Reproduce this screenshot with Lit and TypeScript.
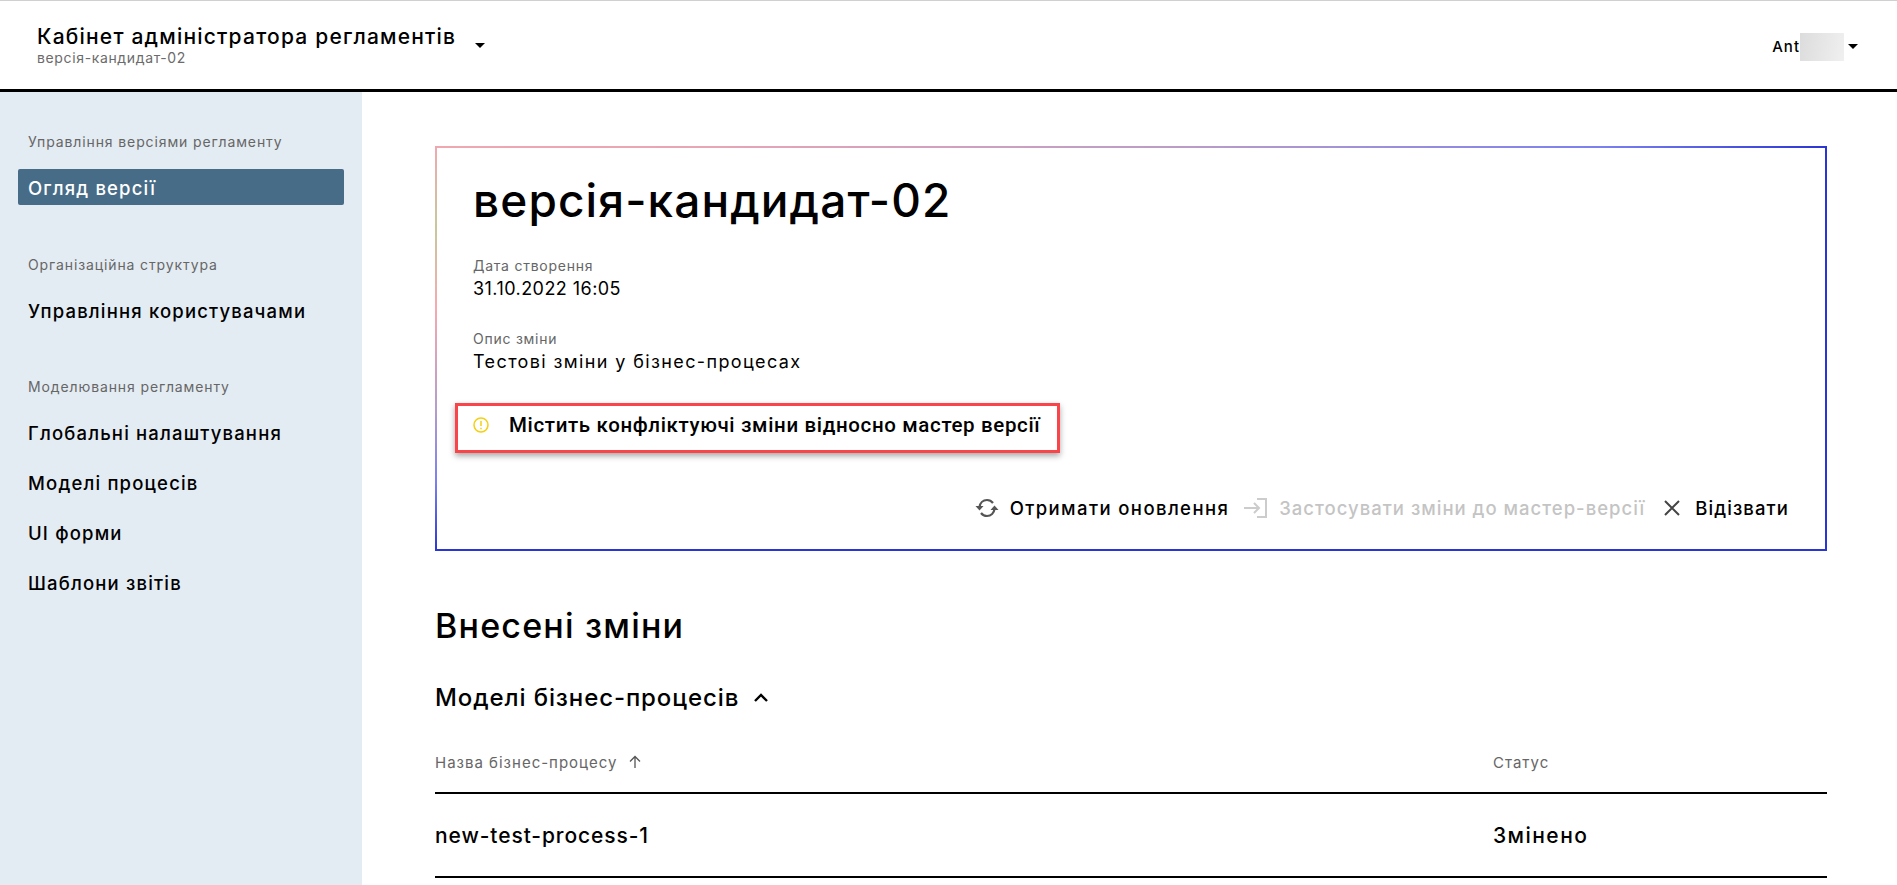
import { LitElement, html, css } from "lit";
import { customElement } from "lit/decorators.js";

@customElement("app-root")
export class AppRoot extends LitElement {
  static styles = css`
    :host { display: block; width: 1897px; height: 885px; overflow: hidden; background: #fff; color: #000; font-family: "Inter", "Noto Sans", sans-serif; }
    .header { box-sizing: border-box; height: 92px; border-top: 1px solid #d0d0d0; border-bottom: 3px solid #000; display: flex; align-items: center; justify-content: space-between; padding: 0 39px 0 37px; }
    .brand { display: flex; align-items: center; gap: 19px; }
    .brand-title { font-size: 21px; line-height: 26px; font-weight: 500; letter-spacing: 1.2px; }
    .brand-sub { font-size: 14px; line-height: 16px; color: #6b6b6b; letter-spacing: .64px; }
    .caret { width: 0; height: 0; border-left: 5px solid transparent; border-right: 5px solid transparent; border-top: 5px solid #000; }
    .user { display: flex; align-items: center; font-size: 15px; font-weight: 500; letter-spacing: 1px; }
    .user-name { margin-top: 2px; }
    .user .caret { margin: 2px 0 0 4px; }
    .blur { width: 44px; height: 28px; margin-top: 4px; background: linear-gradient(100deg, #dcdcdc, #e6e6e6 50%, #f0f0f0); }
    .body { display: flex; height: 793px; }
    .side { width: 362px; flex: none; background: #e4ecf3; box-sizing: border-box; padding: 39px 18px 0; }
    .sec { font-size: 14px; line-height: 22px; color: #666; padding-left: 10px; letter-spacing: .88px; margin-bottom: 16px; }
    .sec.next { margin-top: 48.5px; margin-bottom: 16px; }
    .item { font-size: 18.5px; line-height: 38px; height: 36px; margin-bottom: 14px; padding-left: 10px; font-weight: 500; letter-spacing: 1.17px; }
    .item.active { background: #476c88; color: #fff; border-radius: 2px; }
    .main { flex: 1; padding: 54px 70px 0 73px; min-width: 0; }
    .card {
      box-sizing: border-box; height: 405px; border: 2px solid transparent; padding: 19px 36px 30px 36px;
      display: flex; flex-direction: column;
      background-origin: border-box;
      background-repeat: no-repeat;
      background-image:
        linear-gradient(to right, #f0a8b0 0%, #e8a5b5 20%, #b89cc8 55%, #7a80f0 84%, #2a35d5 100%),
        linear-gradient(to bottom, #f0a8b0 0%, #c8c89a 20%, #f8a8b0 40%, #b49ccc 65%, #7a80f0 83%, #2a35d5 100%),
        linear-gradient(#2a35d5, #2a35d5),
        linear-gradient(#2a35d5, #2a35d5);
      background-size: 100% 2px, 2px 100%, 2px 100%, 100% 2px;
      background-position: left top, left top, right top, left bottom;
    }
    h1 { margin: 0; font-size: 46px; line-height: 66px; font-weight: 500; letter-spacing: 1.1px; }
    .lbl { font-size: 14px; line-height: 18px; margin-bottom: 2px; color: #666; letter-spacing: .75px; }
    .val { font-size: 18px; line-height: 24px; letter-spacing: .45px; }
    .val.wide { letter-spacing: 1.38px; }
    .meta { margin-top: 24px; }
    .meta + .meta { margin-top: 29px; }
    .warn { display: flex; align-items: center; gap: 20px; margin-top: 36px; position: relative; height: 30px; font-family: "Roboto", "Liberation Sans", sans-serif; font-size: 20.5px; font-weight: 500; letter-spacing: .65px; }
    .mark { position: absolute; left: -18px; top: -7px; width: 605px; height: 50px; box-sizing: border-box; border: 3px solid #f94449; box-shadow: 0 3px 6px rgba(0,0,0,.35); pointer-events: none; }
    .actions { margin-top: auto; align-self: flex-end; display: flex; align-items: center; font-size: 18.5px; font-weight: 500; letter-spacing: 1.1px; }
    .act { display: flex; align-items: center; gap: 11px; }
    .act.get { letter-spacing: 1.4px; }
    .act.off { color: #c4c4c4; margin-left: 15px; letter-spacing: 1px; }
    .act.close { gap: 14px; margin-left: 18px; }
    h2 { margin: 52px 0 0; font-size: 34px; line-height: 46px; font-weight: 500; letter-spacing: 1.2px; }
    .sub { display: flex; align-items: center; gap: 14px; font-size: 24px; line-height: 30px; font-weight: 500; letter-spacing: .9px; margin-top: 34px; }
    .table { margin-top: 19px; }
    .row { display: grid; grid-template-columns: 1058px 1fr; align-items: center; border-bottom: 2px solid #000; }
    .row.head { height: 60px; font-size: 15px; color: #666; letter-spacing: 1px; }
    .row.data { height: 82px; font-size: 21px; font-weight: 500; letter-spacing: .9px; }
    .state { letter-spacing: 1.45px; }
    .name { display: flex; align-items: center; gap: 10px; }
  `;

  render() {
    return html`
      <div class="header">
        <div class="brand">
          <div>
            <div class="brand-title">Кабінет адміністратора регламентів</div>
            <div class="brand-sub">версія-кандидат-02</div>
          </div>
          <span class="caret"></span>
        </div>
        <div class="user"><span class="user-name">Ant</span><span class="blur"></span><span class="caret"></span></div>
      </div>
      <div class="body">
        <aside class="side">
          <div class="sec">Управління версіями регламенту</div>
          <div class="item active">Огляд версії</div>
          <div class="sec next">Організаційна структура</div>
          <div class="item">Управління користувачами</div>
          <div class="sec next">Моделювання регламенту</div>
          <div class="item">Глобальні налаштування</div>
          <div class="item">Моделі процесів</div>
          <div class="item">UI форми</div>
          <div class="item">Шаблони звітів</div>
        </aside>
        <main class="main">
          <section class="card">
            <h1>версія-кандидат-02</h1>
            <div class="meta"><div class="lbl">Дата створення</div><div class="val">31.10.2022 16:05</div></div>
            <div class="meta"><div class="lbl">Опис зміни</div><div class="val wide">Тестові зміни у бізнес-процесах</div></div>
            <div class="warn">
              <svg width="16" height="16" viewBox="0 0 16 16" fill="none"><circle cx="8" cy="8" r="7" stroke="#f5cf10" stroke-width="1.5"/><path d="M8 4v5M8 10.8v1.4" stroke="#f5cf10" stroke-width="1.5"/></svg>
              <span>Містить конфліктуючі зміни відносно мастер версії</span>
              <div class="mark"></div>
            </div>
            <div class="actions">
              <div class="act get">
                <svg width="24" height="20" viewBox="0 0 24 20" fill="none" stroke="#555" stroke-width="2.2"><path d="M4.500 9C5 5 8 2 12 2c2.500 0 4.500 1 6 3"/><path d="M19.500 11c-.5 4-3.500 7-7.500 7-2.500 0-4.500-1-6-3"/><path d="M0.500 8h8L4.500 12.500z" fill="#555" stroke="none"/><path d="M15.500 12h8l-4-4.500z" fill="#555" stroke="none"/></svg>
                Отримати оновлення
              </div>
              <div class="act off">
                <svg width="24" height="20" viewBox="0 0 24 20" fill="none" stroke="#ccc" stroke-width="2"><path d="M13 1h9v18h-9"/><path d="M0 10h15M10 5l5 5-5 5"/></svg>
                Застосувати зміни до мастер-версії
              </div>
              <div class="act close">
                <svg width="18" height="18" viewBox="0 0 18 18" fill="none" stroke="#444" stroke-width="2"><path d="M2 2l14 14M16 2L2 16"/></svg>
                Відізвати
              </div>
            </div>
          </section>
          <h2>Внесені зміни</h2>
          <div class="sub">Моделі бізнес-процесів
            <svg width="16" height="10" viewBox="0 0 16 10" fill="none" stroke="#000" stroke-width="2.4"><path d="M2 8l6-6 6 6"/></svg>
          </div>
          <div class="table">
            <div class="row head">
              <div class="name">Назва бізнес-процесу
                <svg width="14" height="14" viewBox="0 0 14 14" fill="none" stroke="#555" stroke-width="1.3"><path d="M7 13V1.500M2 6.500l5-5 5 5"/></svg>
              </div>
              <div>Статус</div>
            </div>
            <div class="row data"><div>new-test-process-1</div><div class="state">Змінено</div></div>
          </div>
        </main>
      </div>
    `;
  }
}
